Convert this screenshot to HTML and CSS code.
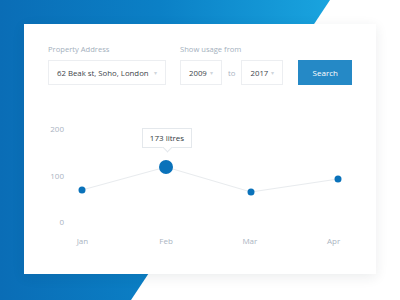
FILE: index.html
```html
<!DOCTYPE html>
<html>
  <head>
    <meta charset="utf-8">
    <meta name="viewport" content="width=device-width">
    <title>Water usage</title>
    <link rel="stylesheet" href="styles.css">
  </head>
  <body>
    <div class="backdrop"></div>
    <main class="card">
      <form class="filters" onsubmit="return false">
        <div class="field">
          <label>Property Address</label>
          <div class="select select-address">62 Beak st, Soho, London <span class="caret">&#9662;</span></div>
        </div>
        <div class="field">
          <label>Show usage from</label>
          <div class="range">
            <div class="select select-year">2009 <span class="caret">&#9662;</span></div>
            <span class="to">to</span>
            <div class="select select-year">2017 <span class="caret">&#9662;</span></div>
          </div>
        </div>
        <button class="search-button">Search</button>
      </form>

      <div class="chart">
        <div class="y-axis">
          <span>200</span>
          <span>100</span>
          <span>0</span>
        </div>
        <div class="plot">
          <svg width="288" height="105" viewBox="0 0 288 105">
            <polyline points="18,67 102,44 187,69 274,56" fill="none" stroke="#e8ebee" stroke-width="1"/>
            <circle cx="18" cy="67" r="3.5" fill="#0a72ba"/>
            <circle cx="102" cy="44" r="7" fill="#0a72ba"/>
            <circle cx="187" cy="69" r="3.5" fill="#0a72ba"/>
            <circle cx="274" cy="56" r="3.5" fill="#0a72ba"/>
          </svg>
          <div class="tooltip">173 litres</div>
        </div>
        <div class="x-axis">
          <span>Jan</span>
          <span>Feb</span>
          <span>Mar</span>
          <span>Apr</span>
        </div>
      </div>
    </main>
  </body>
</html>
```

FILE: styles.css
```css
* {
  margin: 0;
  box-sizing: border-box;
}
body {
  width: 400px;
  height: 300px;
  padding: 24px;
  overflow: hidden;
  background: #ffffff;
  font-family: "Open Sans", "Liberation Sans", sans-serif;
  color: #444b52;
}
.backdrop {
  position: absolute;
  left: 0;
  top: 0;
  width: 400px;
  height: 300px;
  background: linear-gradient(90deg, #0a6db6 0%, #0b80c6 40%, #1aa6e0 85%);
  clip-path: polygon(0 0, 330px 0, 131px 300px, 0 300px);
}
.card {
  position: relative;
  width: 352px;
  height: 250px;
  padding: 19px 24px 0;
  background: #ffffff;
  box-shadow: 0 3px 12px rgba(30, 40, 60, 0.09);
}

/* filters */
.filters {
  display: flex;
  align-items: flex-end;
}
.field {
  display: flex;
  flex-direction: column;
  margin-right: 14px;
}
.field label {
  font-size: 7.6px;
  line-height: 12px;
  color: #a4b0bd;
  margin-bottom: 5px;
}
.select {
  height: 25px;
  display: flex;
  align-items: center;
  justify-content: space-between;
  border: 1px solid #eceef1;
  font-size: 7.8px;
  color: #3d444b;
  padding: 0 8px;
  white-space: nowrap;
}
.select-address {
  width: 118px;
}
.select-year {
  width: 42px;
}
.caret {
  font-size: 6px;
  color: #cfd5db;
}
.range {
  display: flex;
  align-items: center;
}
.to {
  font-size: 7.8px;
  color: #aab4bf;
  margin: 0 6px;
}
.search-button {
  width: 56px;
  height: 25px;
  margin-left: 1px;
  border: none;
  background: #2589c6;
  color: #ffffff;
  font-family: inherit;
  font-size: 8px;
  cursor: pointer;
}

/* chart */
.chart {
  display: grid;
  grid-template-columns: 16px 288px;
  margin-top: 38px;
}
.y-axis {
  display: flex;
  flex-direction: column;
  justify-content: space-between;
  align-items: flex-end;
  height: 105px;
  font-size: 8px;
  line-height: 12px;
  color: #aab4bf;
}
.plot {
  position: relative;
  height: 105px;
}
.plot svg {
  display: block;
}
.tooltip {
  position: absolute;
  left: 78px;
  top: 5px;
  width: 50px;
  height: 20px;
  line-height: 18px;
  text-align: center;
  font-size: 8px;
  color: #333a40;
  background: #ffffff;
  border: 1px solid #e4e8ec;
}
.tooltip::after {
  content: "";
  position: absolute;
  left: 21px;
  bottom: -4px;
  width: 6px;
  height: 6px;
  background: #ffffff;
  border-right: 1px solid #e4e8ec;
  border-bottom: 1px solid #e4e8ec;
  transform: rotate(45deg);
}
.x-axis {
  grid-column: 2;
  display: flex;
  gap: 47px;
  margin-top: 7px;
  font-size: 8px;
  line-height: 12px;
  color: #aab4bf;
}
.x-axis span {
  width: 38px;
  text-align: center;
}
```
